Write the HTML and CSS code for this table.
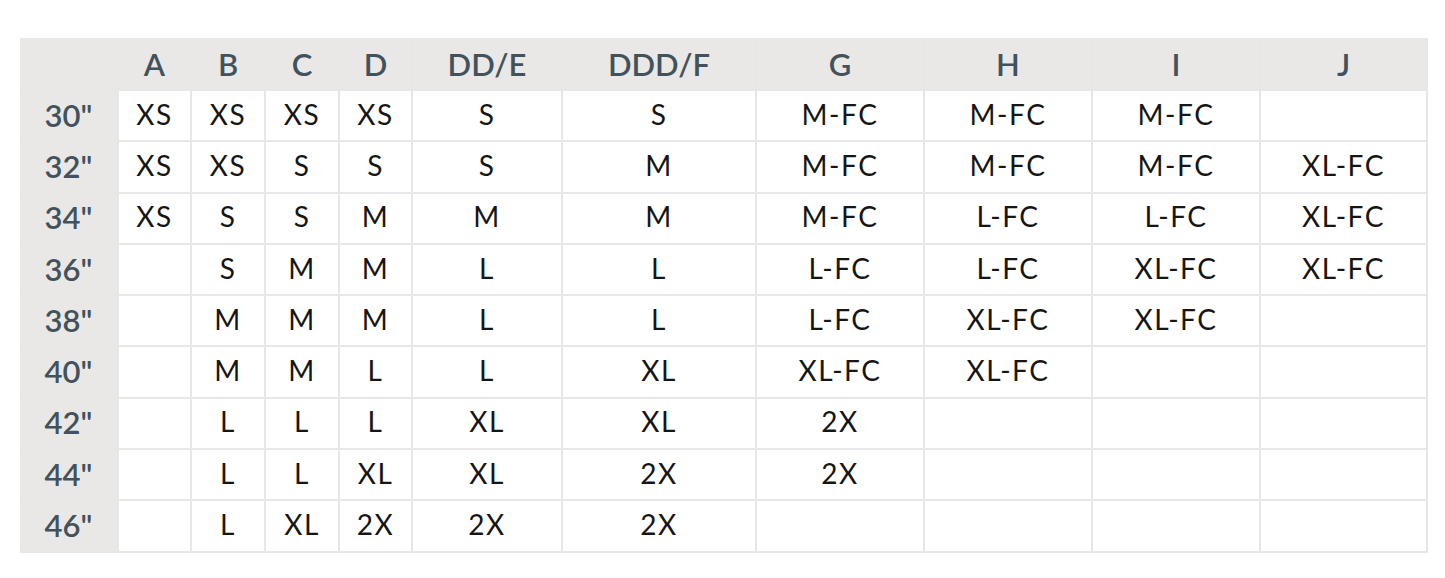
FILE: index.html
```html
<!DOCTYPE html>
<html lang="en">
<head>
<meta charset="utf-8">
<title>Size chart</title>
<link rel="stylesheet" href="styles.css">
</head>
<body>
<div class="chart">
  <div class="head corner"></div>
  <div class="head">A</div><div class="head">B</div><div class="head">C</div><div class="head">D</div><div class="head">DD/E</div><div class="head">DDD/F</div><div class="head">G</div><div class="head">H</div><div class="head">I</div><div class="head">J</div>

  <div class="band">30"</div>
  <div class="cell">XS</div><div class="cell">XS</div><div class="cell">XS</div><div class="cell">XS</div><div class="cell">S</div><div class="cell">S</div><div class="cell">M-FC</div><div class="cell">M-FC</div><div class="cell">M-FC</div><div class="cell"></div>

  <div class="band">32"</div>
  <div class="cell">XS</div><div class="cell">XS</div><div class="cell">S</div><div class="cell">S</div><div class="cell">S</div><div class="cell">M</div><div class="cell">M-FC</div><div class="cell">M-FC</div><div class="cell">M-FC</div><div class="cell">XL-FC</div>

  <div class="band">34"</div>
  <div class="cell">XS</div><div class="cell">S</div><div class="cell">S</div><div class="cell">M</div><div class="cell">M</div><div class="cell">M</div><div class="cell">M-FC</div><div class="cell">L-FC</div><div class="cell">L-FC</div><div class="cell">XL-FC</div>

  <div class="band">36"</div>
  <div class="cell"></div><div class="cell">S</div><div class="cell">M</div><div class="cell">M</div><div class="cell">L</div><div class="cell">L</div><div class="cell">L-FC</div><div class="cell">L-FC</div><div class="cell">XL-FC</div><div class="cell">XL-FC</div>

  <div class="band">38"</div>
  <div class="cell"></div><div class="cell">M</div><div class="cell">M</div><div class="cell">M</div><div class="cell">L</div><div class="cell">L</div><div class="cell">L-FC</div><div class="cell">XL-FC</div><div class="cell">XL-FC</div><div class="cell"></div>

  <div class="band">40"</div>
  <div class="cell"></div><div class="cell">M</div><div class="cell">M</div><div class="cell">L</div><div class="cell">L</div><div class="cell">XL</div><div class="cell">XL-FC</div><div class="cell">XL-FC</div><div class="cell"></div><div class="cell"></div>

  <div class="band">42"</div>
  <div class="cell"></div><div class="cell">L</div><div class="cell">L</div><div class="cell">L</div><div class="cell">XL</div><div class="cell">XL</div><div class="cell">2X</div><div class="cell"></div><div class="cell"></div><div class="cell"></div>

  <div class="band">44"</div>
  <div class="cell"></div><div class="cell">L</div><div class="cell">L</div><div class="cell">XL</div><div class="cell">XL</div><div class="cell">2X</div><div class="cell">2X</div><div class="cell"></div><div class="cell"></div><div class="cell"></div>

  <div class="band">46"</div>
  <div class="cell"></div><div class="cell">L</div><div class="cell">XL</div><div class="cell">2X</div><div class="cell">2X</div><div class="cell">2X</div><div class="cell"></div><div class="cell"></div><div class="cell"></div><div class="cell"></div>
</div>
</body>
</html>
```
FILE: styles.css
```css
html, body {
  margin: 0;
  padding: 0;
  background: #ffffff;
}

body {
  padding: 38px 0 0 20px;
  font-family: Lato, "Liberation Sans", sans-serif;
}

.chart {
  display: grid;
  grid-template-columns: 97px 71px 72px 72px 71px 148px 192px 166px 166px 166px 165px;
  grid-template-rows: 51px repeat(9, 49.3px);
  gap: 2px;
  padding: 0 2px 2px 0;
  width: max-content;
  background: #e7e7e6;
}

.head,
.band {
  display: flex;
  align-items: center;
  justify-content: center;
  background: #e9e8e6;
  color: #41525c;
  font-weight: 600;
  font-size: 31px;
}

.band {
  padding-bottom: 2px;
}

.cell {
  display: flex;
  align-items: center;
  justify-content: center;
  background: #ffffff;
  color: #151515;
  font-weight: 400;
  font-size: 28px;
  letter-spacing: 1.5px;
  padding-bottom: 4px;
}
```
